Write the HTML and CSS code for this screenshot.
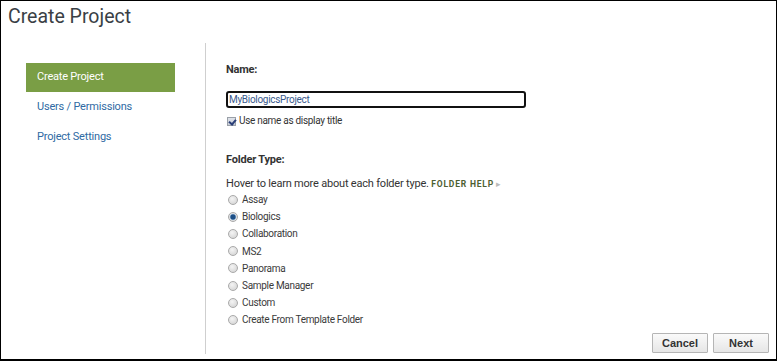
FILE: index.html
```html
<!DOCTYPE html>
<html lang="en">
<head>
    <meta charset="UTF-8">
    <title>Create Project</title>
    <link rel="stylesheet" href="styles.css">
</head>
<body>
    <div class="frame">
        <h1>Create Project</h1>

        <div class="wizard">
            <nav class="steps">
                <a class="step active">Create Project</a>
                <a class="step">Users / Permissions</a>
                <a class="step">Project Settings</a>
            </nav>

            <form class="panel">
                <label class="field-label" for="nameInput">Name:</label>
                <input type="text" id="nameInput" class="name-input" value="MyBiologicsProject">
                <label class="check">
                    <input type="checkbox" checked>
                    <span>Use name as display title</span>
                </label>

                <div class="field-label folder-label">Folder Type:</div>
                <div class="hint">
                    Hover to learn more about each folder type.
                    <a class="help">FOLDER HELP</a><span class="caret">&#9656;</span>
                </div>

                <div class="types">
                    <label class="type"><input type="radio" name="ft"><span>Assay</span></label>
                    <label class="type"><input type="radio" name="ft" checked><span>Biologics</span></label>
                    <label class="type"><input type="radio" name="ft"><span>Collaboration</span></label>
                    <label class="type"><input type="radio" name="ft"><span>MS2</span></label>
                    <label class="type"><input type="radio" name="ft"><span>Panorama</span></label>
                    <label class="type"><input type="radio" name="ft"><span>Sample Manager</span></label>
                    <label class="type"><input type="radio" name="ft"><span>Custom</span></label>
                    <label class="type"><input type="radio" name="ft"><span>Create From Template Folder</span></label>
                </div>

                <div class="buttons">
                    <button type="button" class="btn">Cancel</button>
                    <button type="button" class="btn">Next</button>
                </div>
            </form>
        </div>
    </div>
</body>
</html>
```

FILE: styles.css
```css
:root {
    --text: #333;
    --link: #2f6aa3;
    --green: #7a9e45;
    --rule: #cfcfcf;
}

* {
    box-sizing: border-box;
    margin: 0;
    padding: 0;
}

body {
    font-family: Roboto, "Liberation Sans", sans-serif;
    color: var(--text);
    background: #fff;
}

.frame {
    width: 777px;
    height: 361px;
    border: 1px solid #000;
    border-bottom-width: 2px;
    display: flex;
    flex-direction: column;
}

h1 {
    font-size: 19.5px;
    font-weight: 400;
    color: #3a3f45;
    line-height: 24px;
    padding: 4px 0 0 7px;
    height: 42px;
}

.wizard {
    display: flex;
    height: 311px;
}

.steps {
    width: 205px;
    border-right: 1px solid var(--rule);
    padding: 20px 0 0 25px;
    display: flex;
    flex-direction: column;
}

.step {
    display: block;
    width: 149px;
    height: 30px;
    line-height: 28px;
    padding-left: 11px;
    font-size: 11px;
    letter-spacing: -0.2px;
    color: var(--link);
}

.step.active {
    background: var(--green);
    color: #fff;
    height: 29px;
    margin-bottom: 1px;
}

.panel {
    flex: 1;
    display: flex;
    flex-direction: column;
    align-items: flex-start;
    padding: 19px 7px 1px 20px;
}

.field-label {
    font-size: 11px;
    font-weight: 700;
    letter-spacing: -0.2px;
    line-height: 16px;
}

.name-input {
    margin-top: 13px;
    width: 300px;
    height: 17px;
    border: 2px solid #111;
    border-radius: 3px;
    padding: 0 1px;
    font-family: inherit;
    font-size: 10px;
    letter-spacing: -0.3px;
    color: #3a5a8c;
    outline: none;
}

.check {
    display: flex;
    align-items: center;
    gap: 3px;
    margin-top: 7px;
    margin-left: 1px;
    font-size: 10px;
    letter-spacing: -0.3px;
    line-height: 12px;
}

.check input {
    appearance: none;
    width: 9px;
    height: 9px;
    border: 1px solid #9aa0a8;
    background: linear-gradient(#dfe3ea, #c7ccd6);
    position: relative;
}

.check input:checked::after {
    content: "";
    position: absolute;
    left: 2px;
    top: 0;
    width: 3px;
    height: 5px;
    border: solid #2b3f78;
    border-width: 0 2px 2px 0;
    transform: rotate(40deg);
}

.folder-label {
    margin-top: 25px;
}

.hint {
    margin-top: 8px;
    font-size: 11px;
    letter-spacing: -0.2px;
    line-height: 16px;
}

.help {
    font-size: 8.5px;
    font-weight: 700;
    letter-spacing: 0.8px;
    color: #4d6032;
}

.caret {
    font-size: 9px;
    color: #bbb;
    margin-left: 2px;
}

.types {
    display: flex;
    flex-direction: column;
    margin-top: -1px;
}

.type {
    display: flex;
    align-items: center;
    gap: 4px;
    height: 17.2px;
    font-size: 10px;
    letter-spacing: -0.3px;
    color: #3a3a3a;
    margin-left: 2px;
}

.type input {
    appearance: none;
    width: 10px;
    height: 10px;
    border-radius: 50%;
    border: 1px solid #a9a9a9;
    background: radial-gradient(circle at 40% 35%, #f4f4f4, #cfcfcf);
}

.type input:checked {
    background: radial-gradient(circle, #1d4f86 0 2.2px, #7fa3c8 2.8px, #e6e6e6 3.6px, #c8c8c8);
}

.buttons {
    margin-top: auto;
    align-self: flex-end;
    display: flex;
    gap: 5px;
}

.btn {
    height: 20px;
    width: 56px;
    border: 1px solid #b5b5b5;
    border-radius: 1px;
    background: linear-gradient(#fafafa, #e6e6e6);
    font-family: "Liberation Sans", Arial, sans-serif;
    font-size: 11px;
    font-weight: 700;
    color: #333;
}
```
